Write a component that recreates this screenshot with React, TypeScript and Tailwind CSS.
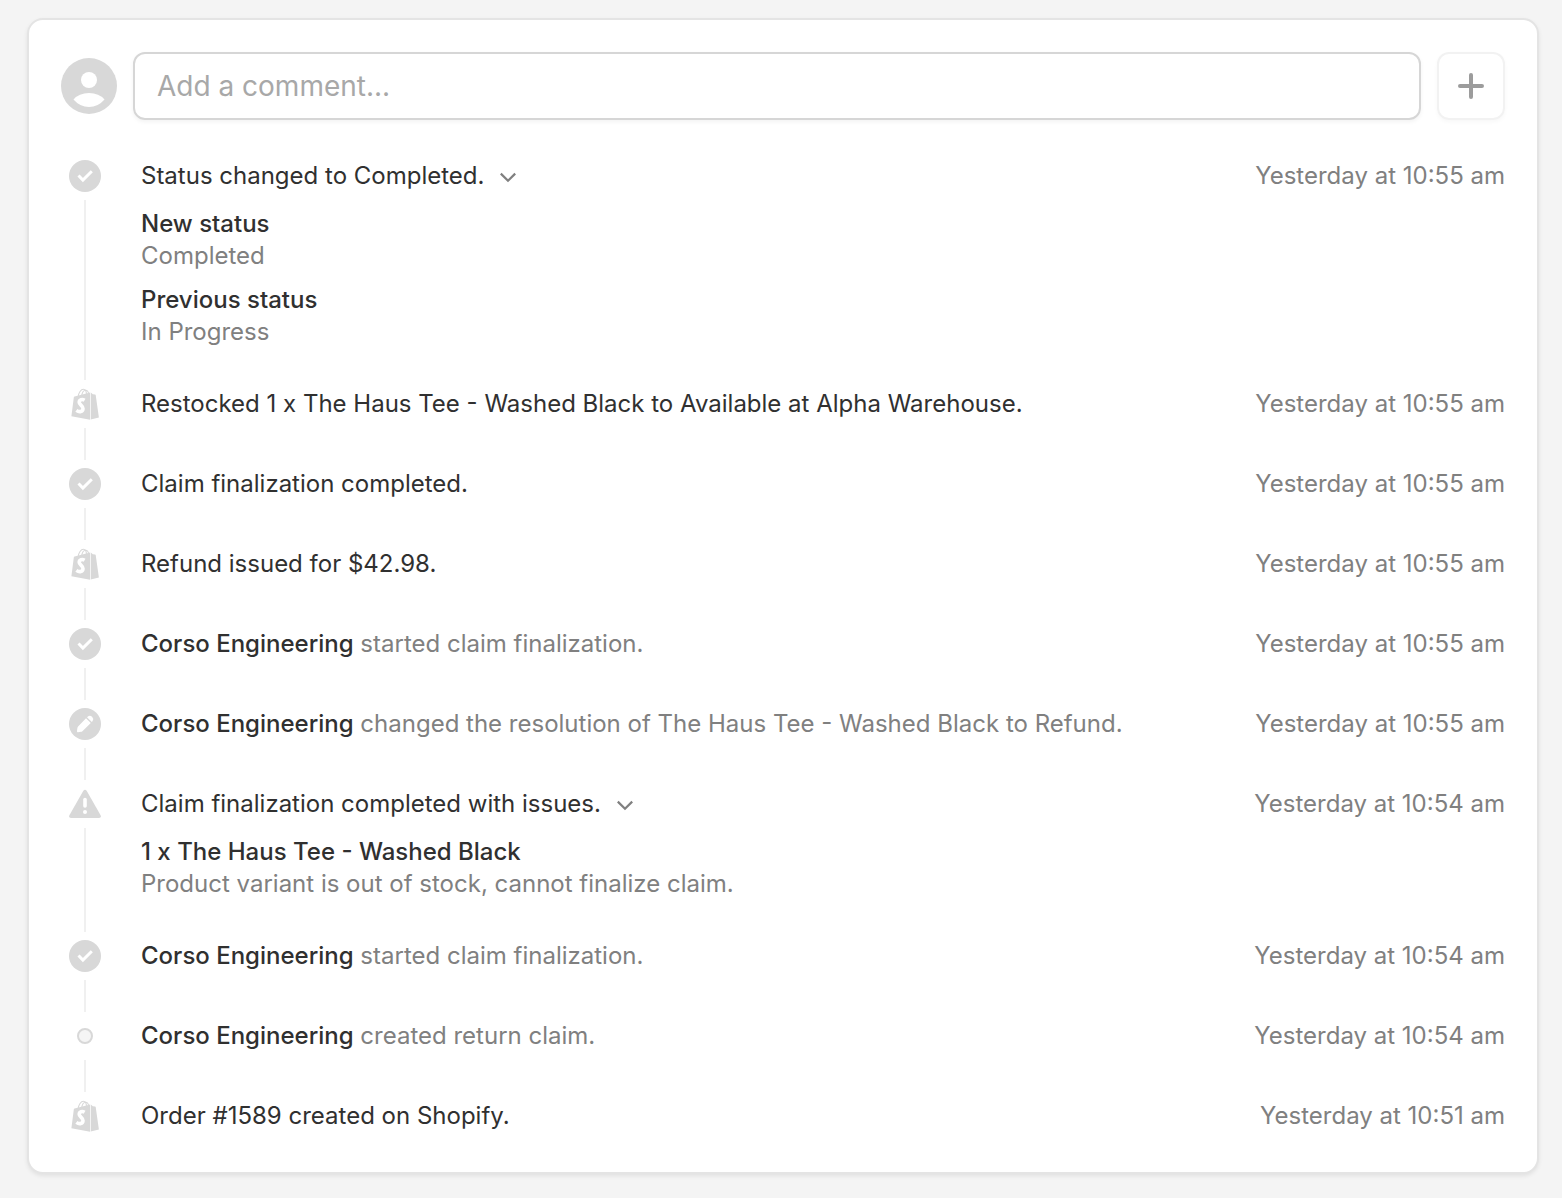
import { useState } from "react";
import type { ReactNode } from "react";

type IconKind = "check" | "shopify" | "pencil" | "warning" | "dot";

type Detail = { label: string; value: string };

type TimelineEvent = {
  id: number;
  icon: IconKind;
  author?: string;
  text: string;
  time: string;
  details?: Detail[];
};

const events: TimelineEvent[] = [
  {
    id: 1,
    icon: "check",
    text: "Status changed to Completed.",
    time: "Yesterday at 10:55 am",
    details: [
      { label: "New status", value: "Completed" },
      { label: "Previous status", value: "In Progress" },
    ],
  },
  {
    id: 2,
    icon: "shopify",
    text: "Restocked 1 x The Haus Tee - Washed Black to Available at Alpha Warehouse.",
    time: "Yesterday at 10:55 am",
  },
  {
    id: 3,
    icon: "check",
    text: "Claim finalization completed.",
    time: "Yesterday at 10:55 am",
  },
  {
    id: 4,
    icon: "shopify",
    text: "Refund issued for $42.98.",
    time: "Yesterday at 10:55 am",
  },
  {
    id: 5,
    icon: "check",
    author: "Corso Engineering",
    text: "started claim finalization.",
    time: "Yesterday at 10:55 am",
  },
  {
    id: 6,
    icon: "pencil",
    author: "Corso Engineering",
    text: "changed the resolution of The Haus Tee - Washed Black to Refund.",
    time: "Yesterday at 10:55 am",
  },
  {
    id: 7,
    icon: "warning",
    text: "Claim finalization completed with issues.",
    time: "Yesterday at 10:54 am",
    details: [
      {
        label: "1 x The Haus Tee - Washed Black",
        value: "Product variant is out of stock, cannot finalize claim.",
      },
    ],
  },
  {
    id: 8,
    icon: "check",
    author: "Corso Engineering",
    text: "started claim finalization.",
    time: "Yesterday at 10:54 am",
  },
  {
    id: 9,
    icon: "dot",
    author: "Corso Engineering",
    text: "created return claim.",
    time: "Yesterday at 10:54 am",
  },
  {
    id: 10,
    icon: "shopify",
    text: "Order #1589 created on Shopify.",
    time: "Yesterday at 10:51 am",
  },
];

function Svg({ children }: { children: ReactNode }) {
  return (
    <svg viewBox="0 0 32 32" className="size-8" aria-hidden="true">
      {children}
    </svg>
  );
}

function EventIcon({ kind }: { kind: IconKind }) {
  switch (kind) {
    case "check":
      return (
        <Svg>
          <circle cx="16" cy="16" r="16" fill="#d8d8d8" />
          <path
            d="M9.5 15.5 13.9 20 22.8 11.2"
            fill="none"
            stroke="#fff"
            strokeWidth="3"
          />
        </Svg>
      );
    case "shopify":
      return (
        <Svg>
          <path
            d="M9 9C9.6 4.6 12 1.2 14.4 1.2 16.6 1.2 17.5 4 17.5 7M12.6 8C13.2 4.4 15 2.2 16.6 2.2 18.4 2.2 19.4 4 19.8 6"
            fill="none"
            stroke="#d8d8d8"
            strokeWidth="1.1"
          />
          <path
            d="M5.6 8.4 21.1 4.4V31.7L2.4 28.2 4.8 9.4Q4.9 8.6 5.6 8.4Z"
            fill="#d8d8d8"
          />
          <path
            d="M21.8 4.4 23.8 6.2 26 6.4Q26.6 6.5 26.7 7.1L29.9 29.6 21.8 31.6Z"
            fill="#d8d8d8"
          />
          <path
            d="M15.6 12.2C13.2 10.8 10.3 11.6 10.2 14.2 10.1 16.8 14.2 17.4 14 20.6 13.8 23.8 10.4 24.6 7.4 22.4"
            fill="none"
            stroke="#fff"
            strokeWidth="3.6"
          />
        </Svg>
      );
    case "pencil":
      return (
        <Svg>
          <circle cx="16" cy="16" r="16" fill="#d8d8d8" />
          <path
            d="M17 10.2 21.8 15 13.4 23.2Q12.8 23.7 12 23.8L9 24.2Q7.8 24.3 8 23L8.4 20Q8.5 19.2 9.1 18.6Z"
            fill="#fff"
          />
          <path
            d="M18 9.2 18.9 8.4Q21 6.8 23.1 8.8 25.1 10.9 23.6 13.1L22.8 14Z"
            fill="#fff"
          />
        </Svg>
      );
    case "warning":
      return (
        <Svg>
          <path
            d="M14.2 3Q16 .6 17.8 3L31.6 27.2Q32.6 29.8 30 30H2Q-.6 29.8.4 27.2Z"
            fill="#d8d8d8"
          />
          <path
            d="M16 11.5v6.5"
            stroke="#fff"
            strokeWidth="3.6"
            strokeLinecap="round"
          />
          <circle cx="16" cy="24" r="2" fill="#fff" />
        </Svg>
      );
    default:
      return (
        <Svg>
          <circle
            cx="16"
            cy="16"
            r="7"
            fill="#f5f5f5"
            stroke="#d8d8d8"
            strokeWidth="2"
          />
        </Svg>
      );
  }
}

function TimelineRow({
  event,
  isLast,
}: {
  event: TimelineEvent;
  isLast: boolean;
}) {
  const [open, setOpen] = useState(true);
  const showDetails = Boolean(event.details) && open;
  const spacing = isLast ? "" : showDetails ? "pb-10" : "pb-12";

  return (
    <li className="flex gap-10">
      <div className="flex w-8 shrink-0 flex-col items-center gap-2">
        <EventIcon kind={event.icon} />
        {!isLast && <div className="mb-2 w-0.5 grow bg-[#f0f0f0]" />}
      </div>
      <div className={`min-w-0 grow ${spacing}`}>
        <div className="flex justify-between gap-8">
          {event.details ? (
            <button
              type="button"
              onClick={() => setOpen(!open)}
              aria-expanded={open}
              className="flex items-center gap-4 text-left"
            >
              {event.text}
              <svg
                viewBox="0 0 16 16"
                className="size-4 text-[#808080]"
                fill="none"
                stroke="currentColor"
                strokeWidth="2.2"
                aria-hidden="true"
              >
                <path d="M.8 5.6 8 12.8 15.2 5.6" />
              </svg>
            </button>
          ) : event.author ? (
            <p className="text-[#808080]">
              <span className="font-medium text-[#303030]">{event.author}</span>{" "}
              {event.text}
            </p>
          ) : (
            <p>{event.text}</p>
          )}
          <time className="shrink-0 text-[#808080]">{event.time}</time>
        </div>

        {showDetails && (
          <dl className="mt-4 space-y-3">
            {event.details?.map((detail) => (
              <div key={detail.label}>
                <dt className="font-medium">{detail.label}</dt>
                <dd className="text-[#808080]">{detail.value}</dd>
              </div>
            ))}
          </dl>
        )}
      </div>
    </li>
  );
}

export default function App() {
  const [comment, setComment] = useState("");

  return (
    <main className="min-h-screen bg-[#f4f4f4] pt-[18px] pr-[23px] pb-6 pl-[27px] font-['Inter',sans-serif] text-2xl leading-8 text-[#303030]">
      <section className="rounded-2xl border-2 border-[#e4e4e4] bg-white px-8 pt-8 pb-10 shadow-[0_2px_4px_rgba(0,0,0,0.08)]">
        <form
          className="flex items-center gap-4"
          onSubmit={(e) => e.preventDefault()}
        >
          <svg
            viewBox="0 0 56 56"
            className="size-14 shrink-0"
            aria-hidden="true"
          >
            <circle cx="28" cy="28" r="28" fill="#d8d8d8" />
            <circle cx="28" cy="22" r="8" fill="#fff" />
            <path
              d="M12.5 41.5Q18 35 28 35T43.5 41.5Q37 49 28 49T12.5 41.5Z"
              fill="#fff"
            />
          </svg>
          <input
            type="text"
            aria-label="Add a comment"
            placeholder="Add a comment..."
            value={comment}
            onChange={(e) => setComment(e.target.value)}
            className="h-[68px] min-w-0 grow rounded-xl border-2 border-[#d6d6d6] px-[22px] text-[28px] shadow-[0_2px_4px_rgba(0,0,0,0.05)] outline-none placeholder:text-[#a8a8a8]"
          />
          <button
            type="submit"
            aria-label="Post comment"
            className="flex size-[68px] shrink-0 items-center justify-center rounded-xl border-2 border-[#f2f2f2] shadow-[0_2px_4px_rgba(0,0,0,0.03)]"
          >
            <svg
              viewBox="0 0 26 26"
              className="size-[26px]"
              stroke="#9c9c9c"
              strokeWidth="4"
              strokeLinecap="round"
              aria-hidden="true"
            >
              <path d="M13 2v22M2 13h22" />
            </svg>
          </button>
        </form>

        <ul className="mt-10 pl-2">
          {events.map((event, index) => (
            <TimelineRow
              key={event.id}
              event={event}
              isLast={index === events.length - 1}
            />
          ))}
        </ul>
      </section>
    </main>
  );
}
